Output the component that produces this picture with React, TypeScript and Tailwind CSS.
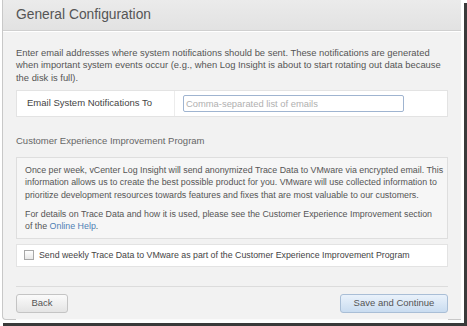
import React from "react";

const App = () => {
    return (
        <div className="w-[467px] h-[326px] bg-white font-['Liberation_Sans',Arial,sans-serif] text-[#555]">
            <div className="w-[464px] h-[323px] pl-[2px] shadow-[3px_3px_0_#3a3a3a]">
                <div className="w-[459px] h-[320px] flex flex-col border-l border-b border-[#c8c8c8] bg-[#f2f2f2] rounded-bl-[4px]">
                    <div className="h-[31px] flex items-center px-[13px] bg-gradient-to-b from-[#ebebeb] to-[#e2e2e2] border-b border-[#d0d0d0]">
                        <h1 className="text-[13.8px] text-[#555] pt-[1px]">General Configuration</h1>
                    </div>
                    <div className="flex-1 flex flex-col px-[13px] pt-[15px] border-t border-white">
                        <p className="text-[9.4px] leading-[12.3px] whitespace-nowrap">
                            Enter email addresses where system notifications should be sent. These notifications are generated
                            <br />
                            when important system events occur (e.g., when Log Insight is about to start rotating out data because
                            <br />
                            the disk is full).
                        </p>
                        <div className="mt-[6px] h-[27px] flex items-center bg-white border border-[#e3e3e3] text-[9.5px]">
                            <div className="w-[158px] h-full flex items-center pl-[10px] border-r border-[#ececec] text-[#444]">
                                Email System Notifications To
                            </div>
                            <input
                                className="ml-[8px] w-[221px] h-[17px] px-[2px] border border-[#9fb4d0] rounded-[2px] text-[9.4px] outline-none placeholder:text-[#b0b0b0]"
                                placeholder="Comma-separated list of emails"
                            />
                        </div>
                        <div className="mt-[17px] text-[9.5px] text-[#666]">Customer Experience Improvement Program</div>
                        <div className="mt-[9px] border border-[#dedede] bg-[#f6f6f6] px-[8px] pt-[6px] pb-[5px] text-[8.85px] leading-[12.3px] whitespace-nowrap">
                            <p>
                                Once per week, vCenter Log Insight will send anonymized Trace Data to VMware via encrypted email. This
                                <br />
                                information allows us to create the best possible product for you. VMware will use collected information to
                                <br />
                                prioritize development resources towards features and fixes that are most valuable to our customers.
                            </p>
                            <p className="mt-[7px]">
                                For details on Trace Data and how it is used, please see the Customer Experience Improvement section
                                <br />
                                of the <span className="text-[#4f7fb5]">Online Help</span>.
                            </p>
                        </div>
                        <div className="mt-[5px] h-[23px] flex items-center gap-[5px] bg-white border border-[#e3e3e3] pl-[7px] text-[8.8px] text-[#444]">
                            <span className="w-[10px] h-[10px] border border-[#a8a8a8] bg-gradient-to-b from-white to-[#e8e8e8]" />
                            Send weekly Trace Data to VMware as part of the Customer Experience Improvement Program
                        </div>
                        <div className="mt-auto border-t border-[#dcdcdc] shadow-[0_1px_0_#fafafa] h-[33px] flex items-center justify-between">
                            <button className="w-[52px] h-[19px] rounded-[3px] border border-[#c4c4c4] bg-gradient-to-b from-[#fbfbfb] to-[#e4e4e4] text-[9.5px] text-[#555]">
                                Back
                            </button>
                            <button className="w-[108px] h-[19px] rounded-[3px] border border-[#a9bed6] bg-gradient-to-b from-[#eaf2fb] to-[#c9dcf0] text-[9.5px] text-[#555]">
                                Save and Continue
                            </button>
                        </div>
                    </div>
                </div>
            </div>
        </div>
    );
};

export default App;
